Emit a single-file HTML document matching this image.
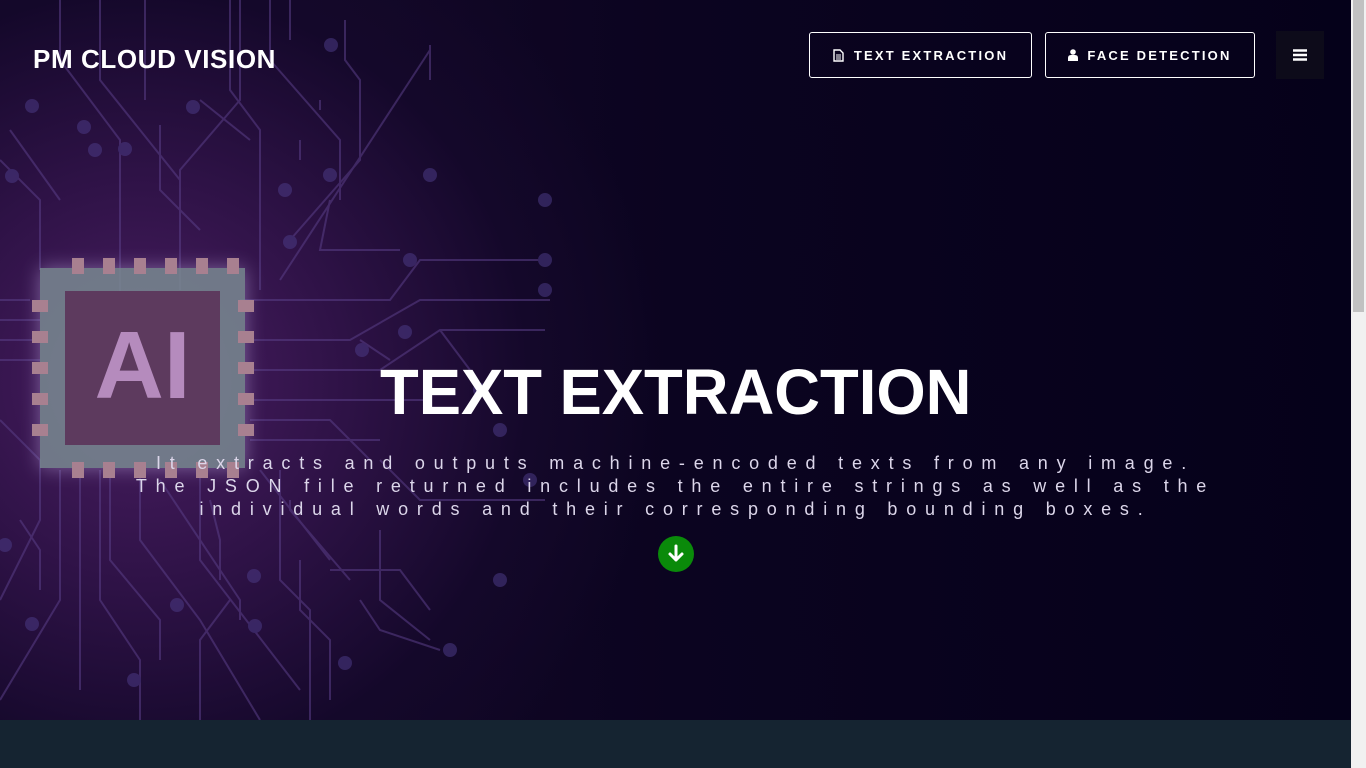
<!DOCTYPE html>
<html><head><meta charset="utf-8"><style>
html,body{margin:0;padding:0;width:1366px;height:768px;overflow:hidden;background:#0a0419;font-family:"Liberation Sans",sans-serif}
.hero{position:absolute;left:0;top:0;width:1351px;height:720px;overflow:hidden;
background:radial-gradient(ellipse 520px 520px at 140px 380px,#4a1e62 0%,#2e1246 40%,#14082a 75%,rgba(8,3,24,0) 100%),linear-gradient(90deg,#1a0a2c 0%,#0b0420 50%,#05011a 100%)}
.bottom{position:absolute;left:0;top:720px;width:1351px;height:48px;background:#152431}
.scroll{position:absolute;right:0;top:0;width:15px;height:768px;background:#f1f1f1}
.thumb{position:absolute;right:2px;top:0;width:11px;height:312px;background:#c1c1c1}
.logo{position:absolute;left:33px;top:44px;color:#fff;font-weight:bold;font-size:26px;letter-spacing:0.6px}
.btn{position:absolute;top:32px;height:46px;border:1px solid #fff;border-radius:3px;color:#fff;font-weight:bold;font-size:13px;letter-spacing:2.2px;display:flex;align-items:center;justify-content:center;box-sizing:border-box}
.menu{position:absolute;left:1276px;top:31px;width:48px;height:48px;background:#0d0b1a;display:flex;align-items:center;justify-content:center}
h1{position:absolute;left:0;width:1351px;top:355px;margin:0;text-align:center;color:#fff;font-size:64px;font-weight:bold}
h1 span{display:inline-block;transform:scaleX(0.99)}
.p{position:absolute;left:0;width:1351px;top:452px;text-align:center;color:#dcd6ea;font-size:18px;letter-spacing:8.8px;line-height:23px;font-weight:normal}
.dl{position:absolute;left:658px;top:536px;width:36px;height:36px;border-radius:50%;background:#0a8a0a}
</style></head><body>
<div class="hero">
<svg width="1351" height="720" style="position:absolute;left:0;top:0" fill="none" stroke="#5a3f88" stroke-width="2" opacity="0.55">
<g>
<path d="M60 0V60L120 140V360"/><path d="M145 0V100"/><path d="M100 0V80L180 180V290"/>
<path d="M230 0V90L260 130V290"/><path d="M270 0V60L340 140V200"/>
<path d="M200 100L250 140"/><path d="M320 100V110"/>
<path d="M290 0V40"/><path d="M240 0V100L180 170V290"/>
<path d="M345 20V60L360 80V160L290 240"/><path d="M430 45V80"/>
<path d="M0 160L40 200V270"/><path d="M10 130L60 200"/>
<path d="M300 140V160"/><path d="M160 125V190L200 230"/>
<path d="M430 50L280 280"/><path d="M330 200L320 250H400"/>
<path d="M240 300H390L420 260H545"/><path d="M250 340H350L420 300H550"/>
<path d="M250 370H380L440 330H545"/><path d="M250 400H430"/>
<path d="M360 340L390 360"/><path d="M440 330L470 370"/>
<path d="M250 420H330L370 460"/><path d="M380 460L420 500H545"/>
<path d="M250 440H380"/>
<path d="M0 300H30"/><path d="M0 320H40"/><path d="M0 340H40"/><path d="M0 360H40"/>
<path d="M0 420L40 460V520L0 600"/><path d="M20 520L40 550V590"/>
<path d="M60 470V600L0 700"/><path d="M80 470V690"/>
<path d="M100 470V600L140 660V720"/><path d="M110 470V560L160 620V660"/>
<path d="M140 470V540L200 620L260 720"/><path d="M160 480L240 600V620"/>
<path d="M200 470V560L300 690"/><path d="M210 500L220 540V580"/>
<path d="M280 470V580L310 610V720"/><path d="M260 470L330 560"/>
<path d="M290 500L290 510L350 580"/><path d="M300 560V610L330 640V700"/>
<path d="M230 600L200 640V720"/><path d="M380 530L380 600L430 640"/>
<path d="M360 600L380 630L440 650"/><path d="M330 570H400L430 610"/>
</g>
<g fill="#4b3a85" stroke="none">
<circle cx="12" cy="176" r="7"/><circle cx="32" cy="106" r="7"/><circle cx="84" cy="127" r="7"/><circle cx="95" cy="150" r="7"/>
<circle cx="125" cy="149" r="7"/><circle cx="193" cy="107" r="7"/><circle cx="285" cy="190" r="7"/><circle cx="330" cy="175" r="7"/>
<circle cx="331" cy="45" r="7"/><circle cx="430" cy="175" r="7"/><circle cx="545" cy="200" r="7"/><circle cx="545" cy="260" r="7"/>
<circle cx="545" cy="290" r="7"/><circle cx="410" cy="260" r="7"/><circle cx="290" cy="242" r="7"/><circle cx="362" cy="350" r="7"/>
<circle cx="405" cy="332" r="7"/><circle cx="480" cy="390" r="7"/><circle cx="500" cy="430" r="7"/><circle cx="5" cy="545" r="7"/>
<circle cx="32" cy="624" r="7"/><circle cx="177" cy="605" r="7"/><circle cx="255" cy="626" r="7"/><circle cx="134" cy="680" r="7"/>
<circle cx="345" cy="663" r="7"/><circle cx="254" cy="576" r="7"/><circle cx="450" cy="650" r="7"/><circle cx="500" cy="580" r="7"/>
<circle cx="530" cy="480" r="7"/>
</g>
</svg>
<div style="position:absolute;left:40px;top:268px;width:205px;height:200px;background:#7a8a92;opacity:0.85;box-shadow:0 0 18px rgba(220,200,255,0.5)"></div>
<div style="position:absolute;left:65px;top:291px;width:155px;height:154px;background:#5d3a5e"></div>
<div style="position:absolute;left:65px;top:318px;width:155px;text-align:center;color:#b58bbd;font-weight:bold;font-size:96px;line-height:96px">AI</div>
<div style="position:absolute;left:72px;top:258px;width:170px;height:16px;background:repeating-linear-gradient(90deg,#a88090 0 12px,transparent 12px 31px)"></div>
<div style="position:absolute;left:72px;top:462px;width:170px;height:16px;background:repeating-linear-gradient(90deg,#a88090 0 12px,transparent 12px 31px)"></div>
<div style="position:absolute;left:32px;top:300px;width:16px;height:140px;background:repeating-linear-gradient(180deg,#a88090 0 12px,transparent 12px 31px)"></div>
<div style="position:absolute;left:238px;top:300px;width:16px;height:140px;background:repeating-linear-gradient(180deg,#a88090 0 12px,transparent 12px 31px)"></div>
</div>
<div class="bottom"></div>
<div class="scroll"><div class="thumb"></div></div>
<div class="logo">PM CLOUD VISION</div>
<div class="btn" style="left:809px;width:223px"><svg width="11" height="13" viewBox="0 0 11 13" style="margin-right:10px"><path d="M1 1h6l3 3v8H1z" fill="none" stroke="#fff" stroke-width="1.4"/><path d="M3 6h5M3 8h5M3 10h5" stroke="#fff" stroke-width="1"/></svg>TEXT EXTRACTION</div>
<div class="btn" style="left:1045px;width:210px"><svg width="10" height="12" viewBox="0 0 10 12" style="margin-right:9px"><circle cx="5" cy="3" r="2.8" fill="#fff"/><path d="M0 12V9q0-3 3-3h4q3 0 3 3v3z" fill="#fff"/></svg>FACE DETECTION</div>
<div class="menu"><svg width="14" height="12"><path d="M0 1.5h14M0 6h14M0 10.5h14" stroke="#fff" stroke-width="2.4"/></svg></div>
<h1><span>TEXT EXTRACTION</span></h1>
<div class="p">It extracts and outputs machine-encoded texts from any image.<br>The JSON file returned includes the entire strings as well as the<br>individual words and their corresponding bounding boxes.</div>
<div class="dl"><svg width="36" height="36" viewBox="0 0 36 36"><path d="M18 10v14M12 18l6 6 6-6" stroke="#fff" stroke-width="3" fill="none" stroke-linecap="round" stroke-linejoin="round"/></svg></div>
</body></html>
